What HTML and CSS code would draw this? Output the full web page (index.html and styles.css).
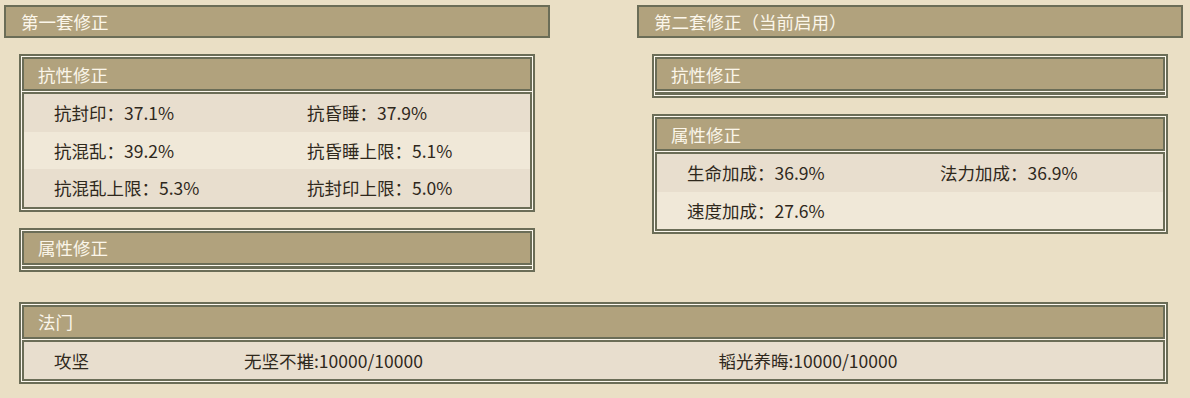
FILE: index.html
```html
<!DOCTYPE html>
<html lang="zh-CN">
<head>
<meta charset="utf-8">
<title>修正</title>
<link rel="stylesheet" href="styles.css">
</head>
<body>
<div class="page">
  <div class="sets">
    <section class="set">
      <div class="set-title">第一套修正</div>
      <div class="panel">
        <div class="panel-head">抗性修正</div>
        <div class="panel-body">
          <div class="row"><span class="cell">抗封印：37.1%</span><span class="cell">抗昏睡：37.9%</span></div>
          <div class="row"><span class="cell">抗混乱：39.2%</span><span class="cell">抗昏睡上限：5.1%</span></div>
          <div class="row"><span class="cell">抗混乱上限：5.3%</span><span class="cell">抗封印上限：5.0%</span></div>
        </div>
      </div>
      <div class="panel">
        <div class="panel-head">属性修正</div>
        <div class="panel-body empty"></div>
      </div>
    </section>
    <section class="set">
      <div class="set-title">第二套修正（当前启用）</div>
      <div class="panel">
        <div class="panel-head">抗性修正</div>
        <div class="panel-body empty"></div>
      </div>
      <div class="panel">
        <div class="panel-head">属性修正</div>
        <div class="panel-body">
          <div class="row"><span class="cell">生命加成：36.9%</span><span class="cell">法力加成：36.9%</span></div>
          <div class="row"><span class="cell">速度加成：27.6%</span><span class="cell"></span></div>
        </div>
      </div>
    </section>
  </div>
  <div class="panel wide">
    <div class="panel-head">法门</div>
    <div class="panel-body">
      <div class="row three"><span class="cell">攻坚</span><span class="cell">无坚不摧:10000/10000</span><span class="cell">韬光养晦:10000/10000</span></div>
    </div>
  </div>
</div>
</body>
</html>
```

FILE: styles.css
```css
html, body {
  margin: 0;
  padding: 0;
  background: #eadfc5;
}

body {
  font-family: "Noto Sans CJK SC", "DejaVu Sans", sans-serif;
  font-size: 17.5px;
  color: #2f281c;
}

.page {
  padding: 5px 0 0 4px;
}

.sets {
  display: grid;
  grid-template-columns: 546px 546px;
  column-gap: 87px;
  align-items: start;
}

.set {
  display: flex;
  flex-direction: column;
  gap: 16px;
}

.set-title {
  box-sizing: border-box;
  height: 33px;
  border: 2px solid #6b6d57;
  background: #b1a27d;
  color: #fbf6ea;
  padding-left: 15px;
  display: flex;
  align-items: center;
}

/* bordered block: dark frame, light inner rule, dark cell frames */
.panel {
  margin: 0 15px;
  border: 2px solid #6b6d57;
  padding: 1px;
  background: #fcf8ee;
  display: flex;
  flex-direction: column;
  gap: 1px;
}

.panel.wide {
  margin: 30px 0 0 15px;
  width: 1149px;
  box-sizing: border-box;
}

.panel-head {
  box-sizing: border-box;
  height: 34px;
  border: 2px solid #6b6d57;
  background: #b1a27d;
  color: #fbf6ea;
  padding-left: 14px;
  display: flex;
  align-items: center;
}

.panel-body {
  border: 2px solid #6b6d57;
  background: #e8dece;
}

.panel-body.empty {
  height: 0;
  border-width: 2px 2px 1px;
}

.row {
  display: grid;
  grid-template-columns: 1fr 1fr;
  height: 37.5px;
  background: #e8dece;
}

.row:nth-child(even) {
  background: #f0e8d8;
}

.row.three {
  grid-template-columns: 190px 1fr 1fr;
}

.cell {
  display: flex;
  align-items: center;
  padding-left: 30px;
  white-space: nowrap;
}
```
